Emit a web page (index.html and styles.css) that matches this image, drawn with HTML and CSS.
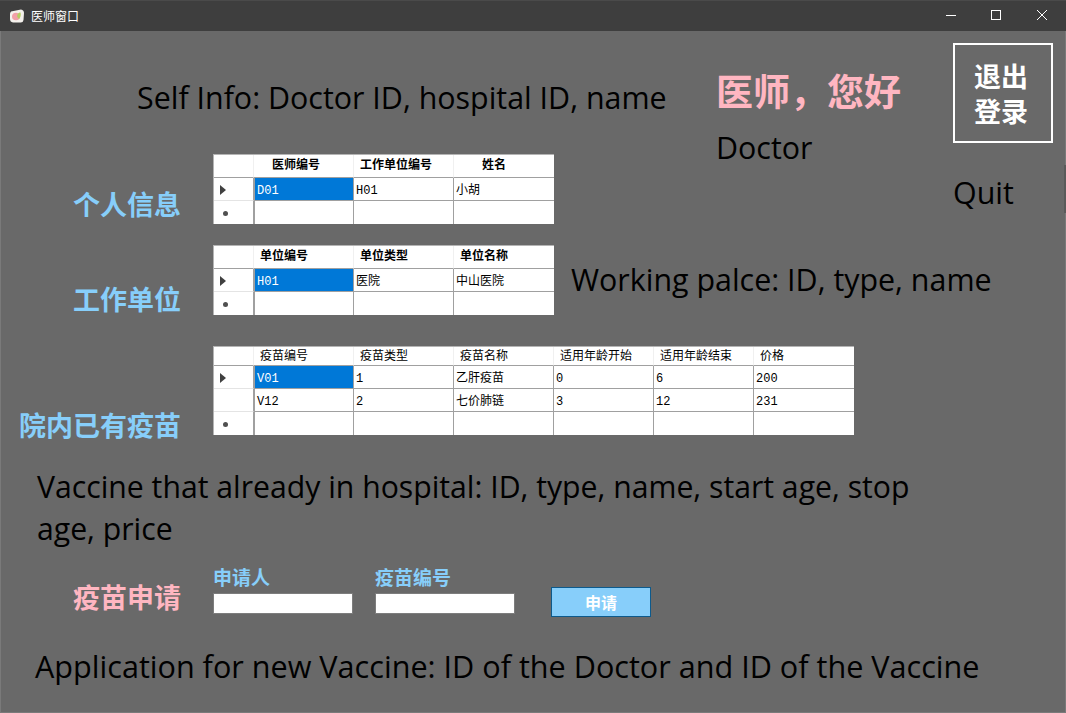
FILE: index.html
```html
<!DOCTYPE html>
<html lang="zh-CN">
<head>
<meta charset="UTF-8">
<meta name="viewport" content="width=device-width, initial-scale=1.0">
<title>医师窗口</title>
<link rel="stylesheet" href="styles.css">
</head>
<body>

<div class="window">
    <div class="titlebar">
        <svg class="app-icon" width="16" height="16" viewBox="0 0 16 16">
            <path d="M2 3.5 L12 1.5 Q15 2 15 5 L14.5 12 Q14 15 11 14.5 L4 14.5 Q1 14 1 11 L1 6 Q1 4.5 2 3.5 Z" fill="#f4f1ec"/>
            <ellipse cx="7" cy="8.5" rx="4" ry="3.8" fill="#f2a0a8"/>
            <path d="M8 8 Q9 4 11.5 4.5 Q12.5 8 10 11 Q8.5 10 8 8 Z" fill="#b5cf62"/>
        </svg>
        <span class="title-text">医师窗口</span>
        <div class="window-controls">
            <svg width="46" height="31" viewBox="0 0 46 31"><path d="M18 15.5 H28" stroke="#fff" fill="none"/></svg>
            <svg width="46" height="31" viewBox="0 0 46 31"><rect x="17.5" y="10.5" width="9" height="9" stroke="#fff" fill="none"/></svg>
            <svg width="46" height="31" viewBox="0 0 46 31"><path d="M17 10 L27 20 M27 10 L17 20" stroke="#fff" fill="none"/></svg>
        </div>
    </div>

    <div class="top-section">
        <div class="left-col">
            <div class="note self-note">Self Info: Doctor ID, hospital ID, name</div>
            <div class="row">
                <div class="side-label blue">个人信息</div>
                <table class="grid">
                    <tr class="head bold"><th></th><th class="in-2">医师编号</th><th class="in-1">工作单位编号</th><th class="in-3">姓名</th></tr>
                    <tr><td class="rowhead"><span class="arrow"></span></td><td class="picked">D01</td><td>H01</td><td>小胡</td></tr>
                    <tr><td class="rowhead"><span class="star"></span></td><td></td><td></td><td></td></tr>
                </table>
            </div>
        </div>
        <div class="mid-col">
            <div class="greeting">医师，您好</div>
            <div class="note">Doctor</div>
        </div>
        <div class="right-col">
            <div class="quit-btn">退出<br>登录</div>
            <div class="note quit-note">Quit</div>
        </div>
    </div>

    <div class="row place-row">
        <div class="side-label blue">工作单位</div>
        <table class="grid">
            <tr class="head bold"><th></th><th class="in-1">单位编号</th><th class="in-1">单位类型</th><th class="in-1">单位名称</th></tr>
            <tr><td class="rowhead"><span class="arrow"></span></td><td class="picked">H01</td><td>医院</td><td>中山医院</td></tr>
            <tr><td class="rowhead"><span class="star"></span></td><td></td><td></td><td></td></tr>
        </table>
        <div class="note place-note">Working palce: ID, type, name</div>
    </div>

    <div class="row vaccine-row">
        <div class="side-label blue">院内已有疫苗</div>
        <table class="grid wide">
            <tr class="head"><th></th><th class="in-1">疫苗编号</th><th class="in-1">疫苗类型</th><th class="in-1">疫苗名称</th><th class="in-1">适用年龄开始</th><th class="in-1">适用年龄结束</th><th class="in-1">价格</th></tr>
            <tr><td class="rowhead"><span class="arrow"></span></td><td class="picked">V01</td><td>1</td><td>乙肝疫苗</td><td>0</td><td>6</td><td>200</td></tr>
            <tr><td class="rowhead"></td><td>V12</td><td>2</td><td>七价肺链</td><td>3</td><td>12</td><td>231</td></tr>
            <tr><td class="rowhead"><span class="star"></span></td><td></td><td></td><td></td><td></td><td></td><td></td></tr>
        </table>
    </div>

    <div class="note vaccine-note">Vaccine that already in hospital: ID, type, name, start age, stop age, price</div>

    <div class="row apply-row">
        <div class="side-label pink">疫苗申请</div>
        <div class="field">
            <label class="field-label" for="doctorId">申请人</label>
            <input class="field-input" id="doctorId" type="text">
        </div>
        <div class="field">
            <label class="field-label" for="vaccineId">疫苗编号</label>
            <input class="field-input" id="vaccineId" type="text">
        </div>
        <button class="apply-btn" type="button">申请</button>
    </div>

    <div class="note apply-note">Application for new Vaccine: ID of the Doctor and ID of the Vaccine</div>

    <div class="edge-mark"></div>
</div>

</body>
</html>
```

FILE: styles.css
```css
* {
    box-sizing: border-box;
}
body {
    margin: 0;
    background-color: #696969;
    font-family: "Noto Sans CJK SC", sans-serif;
}
.window {
    position: relative;
    width: 1066px;
    height: 713px;
    overflow: hidden;
    background-color: #696969;
    box-shadow: inset 1px -1px 0 #7a7a7a, inset -1px 0 0 #7a7a7a;
}
.edge-mark {
    position: absolute;
    top: 165px;
    right: 0;
    width: 2px;
    height: 48px;
    background-color: #5a5a5a;
}
.titlebar {
    display: flex;
    align-items: center;
    height: 31px;
    padding-bottom: 1px;
    background-color: #3e3e3e;
    border-top: 1px solid #4a4a4a;
    color: #fff;
}
.app-icon {
    margin-left: 9px;
}
.title-text {
    margin-left: 6px;
    font-size: 12px;
    line-height: 16px;
}
.window-controls {
    display: flex;
    margin-left: auto;
}
.note {
    font-family: "Open Sans", sans-serif;
    font-size: 30.4px;
    line-height: 42px;
    color: #000;
}
.top-section {
    display: flex;
    height: 204px;
}
.left-col {
    width: 716px;
}
.self-note {
    margin: 46px 0 0 137px;
}
.row {
    display: flex;
}
.side-label {
    width: 181px;
    margin-right: 32px;
    font-size: 27px;
    font-weight: 700;
    text-align: right;
    white-space: nowrap;
}
.blue {
    color: #87cefa;
}
.pink {
    color: #ffb6c1;
}
.top-section .row {
    margin-top: 35px;
}
.top-section .side-label {
    margin-top: 30px;
}
.grid {
    flex: none;
    width: 341px;
    border-collapse: separate;
    border-spacing: 0;
    table-layout: fixed;
    background-color: #fff;
    border-top: 1px solid #b4b4b4;
    border-left: 1px solid #b4b4b4;
}
.grid.wide {
    width: 641px;
}
.grid th,
.grid td {
    height: 23px;
    padding: 3px 0 0 2px;
    overflow: hidden;
    white-space: nowrap;
    text-align: left;
    font-weight: 400;
    font-size: 12px;
    line-height: 16px;
    font-family: "Liberation Mono", "Noto Sans CJK SC", monospace;
    color: #000;
    border-right: 1px solid #a0a0a0;
    border-bottom: 1px solid #a0a0a0;
}
.grid th {
    padding-top: 0;
    border-right: 1px solid #f0f0f0;
}
.grid.wide th {
    height: 19px;
    padding-top: 2px;
}
.grid th:first-child,
.grid td:first-child {
    width: 40px;
    padding: 0;
}
.grid td:nth-child(2) {
    border-left: 1px solid #a0a0a0;
}
.grid th:last-child,
.grid td:last-child {
    border-right: none;
}
.grid tr:last-child td {
    border-bottom: none;
}
.grid .head.bold th {
    font-weight: 700;
}
.grid .in-1 {
    padding-left: 6px;
}
.grid .in-2 {
    padding-left: 18px;
}
.grid .in-3 {
    padding-left: 28px;
}
.grid td.rowhead {
    padding-top: 2px;
    border-bottom: 1px solid #e4e4e4;
}
.grid .picked {
    background-color: #0078d7;
    color: #fff;
}
.arrow {
    display: block;
    width: 0;
    height: 0;
    margin-left: 6px;
    border-top: 5px solid transparent;
    border-bottom: 5px solid transparent;
    border-left: 6px solid #404040;
}
.star {
    display: block;
    width: 5px;
    height: 5px;
    margin-left: 9px;
    border-radius: 50%;
    background-color: #505050;
}
.mid-col {
    width: 237px;
}
.greeting {
    margin-top: 34px;
    font-size: 37px;
    font-weight: 700;
    line-height: 50px;
    color: #ffb6c1;
}
.mid-col .note {
    margin-top: 12px;
}
.quit-btn {
    display: flex;
    align-items: center;
    justify-content: center;
    width: 100px;
    height: 100px;
    margin-top: 12px;
    padding-right: 4px;
    border: 2px solid #fff;
    font-size: 27px;
    font-weight: 700;
    line-height: 35px;
    text-align: center;
    color: #fff;
}
.quit-note {
    margin-top: 29px;
}
.place-row {
    height: 70px;
    margin-top: 10px;
}
.place-row .side-label {
    margin-top: 34px;
}
.place-note {
    margin: 14px 0 0 17px;
}
.vaccine-row {
    height: 89px;
    margin-top: 31px;
}
.vaccine-row .side-label {
    margin-top: 59px;
}
.vaccine-note {
    width: 900px;
    margin: 31px 0 0 37px;
    font-size: 30.2px;
}
.apply-row {
    margin-top: 15px;
}
.apply-row .side-label {
    margin-top: 12px;
}
.field {
    width: 162px;
}
.field-label {
    display: block;
    margin-bottom: 4px;
    font-size: 19px;
    font-weight: 700;
    line-height: 24px;
    color: #87cefa;
}
.field-input {
    display: block;
    width: 140px;
    height: 21px;
    border: 1px solid #7d7d7d;
    background-color: #fff;
}
.apply-btn {
    width: 100px;
    height: 30px;
    margin: 22px 0 0 14px;
    border: 1px solid #0d5a8c;
    background-color: #87cefa;
    color: #fff;
    font-family: "Noto Sans CJK SC", sans-serif;
    font-size: 16px;
    font-weight: 700;
}
.apply-note {
    margin: 28px 0 0 35px;
    font-size: 30.6px;
}
```
